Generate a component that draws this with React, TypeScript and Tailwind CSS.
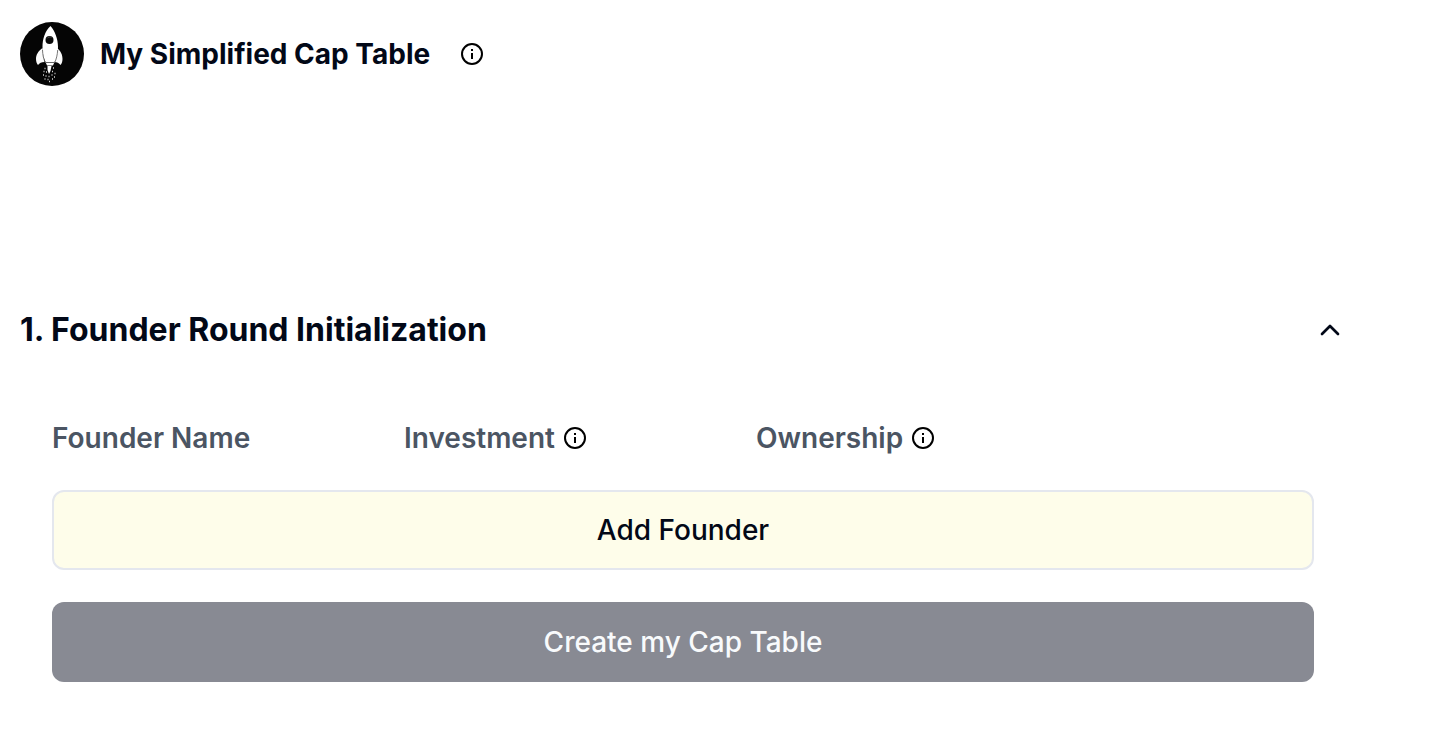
import React, { useState } from 'react';
import { ChevronUp } from 'lucide-react';

interface InfoButtonProps {
  label: string;
}

function InfoButton({ label }: InfoButtonProps) {
  return (
    <button type="button" aria-label={label} className="text-black">
      <svg viewBox="0 0 24 24" className="h-6 w-6" fill="none" stroke="currentColor" strokeWidth="2">
        <circle cx="12" cy="12" r="10" />
        <path d="M12 7V9M12 11V17" />
      </svg>
    </button>
  );
}

function RocketLogo() {
  return (
    <svg viewBox="0 0 64 64" className="h-16 w-16 shrink-0" aria-hidden="true">
      <circle cx="32" cy="32" r="32" fill="#050505" />
      {/* fins */}
      <path d="M22.5 26C18 29 16 33 16 37C16 40 17 42 18 43C19.5 41 21.5 40 24.5 40Z" fill="#fafafa" />
      <path d="M37 26C41 29 42.5 33 42.5 37C42.5 40 41.5 42 40.5 43C39 41 37 40 34.5 40Z" fill="#fafafa" />
      {/* body */}
      <path
        d="M30.5 4C25 9 22.5 17 22.5 25C22.5 31 23.5 36 25.5 40L27 43.5H33L34.5 40C36.5 36 38 31 38 25C38 17 35 9 30.5 4Z"
        fill="#fff"
      />
      <path d="M22.5 28C22.7 33 23.5 37 25.5 41M37.7 28C37.3 33 36.5 37 34.5 41" stroke="#555" strokeWidth="0.8" fill="none" />
      <path d="M25.5 40.5H34.5" stroke="#666" />
      <circle cx="29.5" cy="18" r="4" fill="#0a0a0a" />
      <path d="M27 16.5C28 15 30 14.5 31.5 15.5" stroke="#555" strokeWidth="0.8" fill="none" />
      {/* flame and sparks */}
      <path d="M27.5 44H31.5L30.5 49L29 52L27.5 48Z" fill="#fff" />
      <path
        d="M24.5 46.5H25.5M33 46H34M23.5 49.5H24.5M26 50H27M32 49.5H33M34.5 51.5H35.5M23 53H24M25.5 54H26.5M28.5 54.5H29.5M31.5 53H32.5M34 55H35M24.5 57H25.5M27.5 57.5H28.5M32 57H33M29 59.5H30"
        stroke="#d4d4d4"
        strokeWidth="1.4"
      />
    </svg>
  );
}

export default function App() {
  const [isOpen, setIsOpen] = useState(true);
  const [founders, setFounders] = useState<string[]>([]);

  const addFounder = () => {
    setFounders([...founders, '']);
  };

  const updateFounder = (index: number, name: string) => {
    setFounders(founders.map((founder, i) => (i === index ? name : founder)));
  };

  return (
    <main className="min-h-screen bg-white pt-5 pr-24 pb-12 pl-5 font-['Inter',sans-serif] text-[#020817]">
      <header className="flex h-17 items-center">
        <RocketLogo />
        <h1 className="ml-4 text-[28px] leading-10 font-bold">My Simplified Cap Table</h1>
        <div className="ml-[30px] flex">
          <InfoButton label="About this cap table" />
        </div>
      </header>

      <section className="mt-[210px]">
        <h2>
          <button
            type="button"
            aria-expanded={isOpen}
            onClick={() => setIsOpen(!isOpen)}
            className="flex w-full items-center justify-between py-2 text-left text-[32px] leading-12 font-bold"
          >
            1. Founder Round Initialization
            <ChevronUp className={isOpen ? 'h-8 w-8' : 'h-8 w-8 rotate-180'} />
          </button>
        </h2>

        {isOpen && (
          <div className="mt-14 px-8">
            <table className="w-full max-w-[1056px] table-fixed text-left text-[28px] leading-10">
              <thead className="text-[#4b5563]">
                <tr>
                  <th scope="col" className="p-0 font-semibold">
                    Founder Name
                  </th>
                  <th scope="col" className="p-0 font-semibold">
                    <div className="flex items-center gap-2">
                      Investment
                      <InfoButton label="About investment" />
                    </div>
                  </th>
                  <th scope="col" className="p-0 font-semibold">
                    <div className="flex items-center gap-2">
                      Ownership
                      <InfoButton label="About ownership" />
                    </div>
                  </th>
                </tr>
              </thead>
              <tbody>
                {founders.map((founder, index) => (
                  <tr key={index}>
                    <td className="pt-4 pr-4">
                      <input
                        aria-label="Founder name"
                        value={founder}
                        onChange={(e) => updateFounder(index, e.target.value)}
                        className="w-full rounded-xl border-2 border-slate-200 px-4 py-2"
                      />
                    </td>
                    <td className="pt-4 pr-4">
                      <input
                        aria-label="Investment"
                        type="number"
                        className="w-full rounded-xl border-2 border-slate-200 px-4 py-2"
                      />
                    </td>
                    <td className="pt-4 pr-4">
                      <input
                        aria-label="Ownership"
                        type="number"
                        className="w-full rounded-xl border-2 border-slate-200 px-4 py-2"
                      />
                    </td>
                  </tr>
                ))}
              </tbody>
            </table>

            <div className="mt-8 flex flex-col gap-8">
              <button
                type="button"
                onClick={addFounder}
                className="h-20 w-full rounded-xl border-2 border-[#e4e7ee] bg-[#fefdea] text-[28px] leading-10 font-medium"
              >
                Add Founder
              </button>
              <button
                type="button"
                disabled={founders.length === 0}
                className="h-20 w-full rounded-xl bg-[#0f172a] text-[28px] leading-10 font-medium text-slate-50 disabled:bg-[#888a93]"
              >
                Create my Cap Table
              </button>
            </div>
          </div>
        )}
      </section>
    </main>
  );
}
